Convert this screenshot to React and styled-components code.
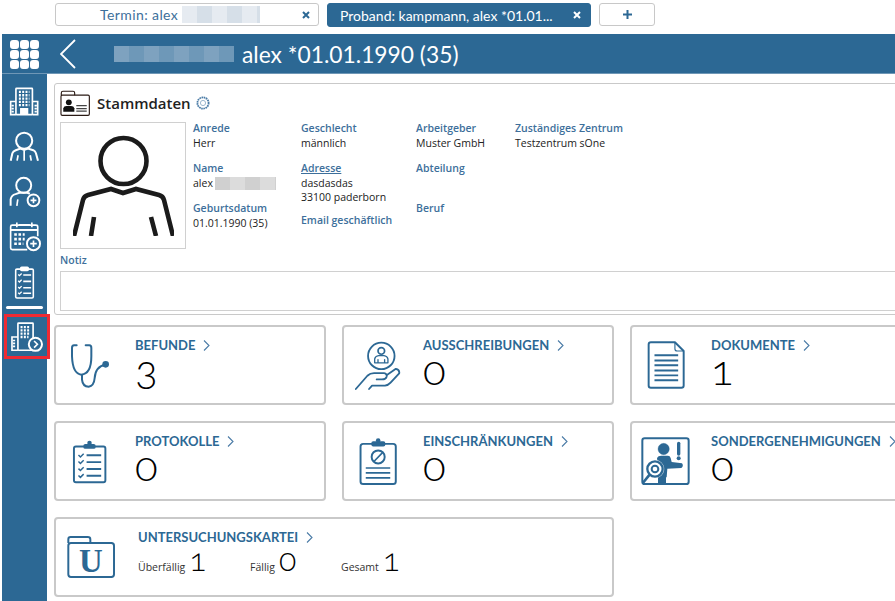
import React from 'react';
import styled, { createGlobalStyle } from 'styled-components';

const BLUE = '#2c6894';
const LABEL = '#3d6f9b';

const Global = createGlobalStyle`
  html, body { margin:0; padding:0; background:#fff; }
  body { font-family:"Open Sans","Liberation Sans",sans-serif; overflow:hidden; }
  * { box-sizing:border-box; }
`;

const Page = styled.div`
  width:895px;
  height:601px;
  overflow:hidden;
  display:flex;
  flex-direction:column;
  padding-left:2px;
`;

const TabBar = styled.div`
  height:34px;
  flex:none;
  display:flex;
  gap:8px;
  padding:3px 0 0 53px;
`;

const Tab = styled.div`
  width:${p => p.$w}px;
  height:${p => p.$active ? 24 : 23}px;
  border-radius:3px;
  border:${p => p.$active ? `1px solid ${BLUE}` : '1px solid #c8c8c8'};
  background:${p => p.$active ? BLUE : '#fff'};
  color:${p => p.$active ? '#fff' : LABEL};
  font-family:Lato,sans-serif;
  font-size:14px;
  letter-spacing:${p => p.$track || 0}px;
  display:flex;
  align-items:center;
  position:relative;
  padding-left:${p => p.$pad}px;
  white-space:nowrap;
`;

const TabClose = styled.svg`
  position:absolute;
  right:${p => p.$right}px;
  top:7px;
`;

const Plus = styled.div`
  width:56px;
  height:23px;
  border-radius:3px;
  border:1px solid #c8c8c8;
  display:flex;
  align-items:center;
  justify-content:center;
  color:${BLUE};
`;

const Redacted = styled.span`
  display:inline-block;
  flex:none;
  width:${p => p.$w}px;
  height:${p => p.$h}px;
  background:repeating-linear-gradient(90deg,${p => p.$a} 0 15px,${p => p.$b} 15px 30px);
  filter:blur(0.7px);
`;

const Header = styled.header`
  height:40px;
  flex:none;
  background:${BLUE};
  border-bottom:1px solid #6f97b6;
  display:flex;
  align-items:center;
  color:#fff;
`;

const AppGrid = styled.div`
  width:29px;
  height:29px;
  margin:2px 0 0 8px;
  display:grid;
  grid-template-columns:repeat(3,9px);
  grid-auto-rows:9px;
  gap:1px;
  span { background:#fff; border-radius:3px; }
`;

const BackIcon = styled.svg`
  margin:0 0 0 21px;
  flex:none;
`;

const HeaderTitle = styled.h1`
  margin:0 0 0 38px;
  display:flex;
  align-items:center;
  gap:8px;
  font-family:Lato,sans-serif;
  font-size:22.8px;
  font-weight:400;
`;

const Body = styled.div`
  flex:1;
  min-height:0;
  display:flex;
`;

const Sidebar = styled.nav`
  width:45px;
  flex:none;
  background:${BLUE};
  padding-top:5px;
  position:relative;
`;

const NavItem = styled.div`
  height:45px;
  display:flex;
  align-items:center;
  justify-content:center;
  svg { display:block; }
`;

const NavRule = styled.hr`
  border:0;
  height:3px;
  background:#fff;
  border-radius:2px;
  margin:2px 4px 5px 4px;
`;

const Highlight = styled(NavItem)`
  width:46px;
  margin-left:2px;
  outline:3px solid #ee2a33;
  outline-offset:-3px;
  position:relative;
  padding-right:2px;
`;

const Content = styled.main`
  flex:1;
  min-width:0;
  padding:9px 0 0 7px;
  overflow:hidden;
`;

const Panel = styled.section`
  width:860px;
  height:232px;
  border:1px solid #c9c9c9;
  border-radius:3px 0 0 3px;
  padding:5px 0 0 5px;
`;

const PanelHead = styled.div`
  display:flex;
  align-items:center;
  height:28px;
  margin-bottom:5px;
`;

const PanelTitle = styled.h2`
  margin:0 5px 0 7px;
  font-size:15px;
  font-weight:600;
  color:#222;
`;

const PanelBody = styled.div`
  display:flex;
`;

const Photo = styled.div`
  width:126px;
  height:127px;
  border:1px solid #d0d0d0;
  display:flex;
  align-items:flex-end;
  justify-content:center;
  padding-bottom:12px;
  flex:none;
`;

const Column = styled.div`
  width:${p => p.$w}px;
  flex:none;
  margin-top:-1px;
  padding-left:${p => p.$pad || 0}px;
`;

const FieldGroup = styled.div`
  min-height:${p => p.$min || 40}px;
`;

const Label = styled.div`
  font-size:10.5px;
  line-height:14px;
  font-weight:600;
  color:${LABEL};
  white-space:nowrap;
  text-decoration:${p => p.$link ? 'underline' : 'none'};
`;

const Value = styled.div`
  font-size:10.5px;
  line-height:14px;
  color:#222;
  margin-top:${p => p.$top || 0}px;
  display:flex;
  align-items:center;
  gap:2px;
  white-space:nowrap;
`;

const NoteLabel = styled(Label)`
  margin-top:4px;
`;

const NoteBox = styled.div`
  height:40px;
  margin-top:4px;
  border:1px solid #d0d0d0;
`;

const Cards = styled.div`
  display:grid;
  grid-template-columns:repeat(3,272px);
  grid-auto-rows:80px;
  gap:16px;
  margin-top:10px;
`;

const Card = styled.article`
  border:2px solid #c9c9c9;
  border-radius:4px;
  display:flex;
  align-items:center;
  grid-column:${p => p.$wide ? 'span 2' : 'auto'};
  width:${p => p.$wide ? '560px' : 'auto'};
`;

const IconSlot = styled.div`
  width:${p => p.$w || 79}px;
  flex:none;
  display:flex;
  justify-content:center;
  padding-right:12px;
  color:${BLUE};
  svg { display:block; }
`;

const CardText = styled.div`
  display:flex;
  flex-direction:column;
  align-self:flex-start;
  padding-top:9px;
`;

const CardTitle = styled.h3`
  margin:0;
  font-family:Lato,sans-serif;
  font-size:13px;
  line-height:18px;
  font-weight:700;
  color:${BLUE};
  display:flex;
  align-items:center;
  gap:8px;
  white-space:nowrap;
`;

const Count = styled.div`
  font-family:Lato,sans-serif;
  font-weight:300;
  font-size:42px;
  line-height:30px;
  color:#000;
  font-variant-numeric:oldstyle-nums;
`;

const Stats = styled.div`
  display:flex;
  margin-top:-1px;
`;

const Stat = styled.div`
  width:${p => p.$w}px;
  display:flex;
  align-items:baseline;
  gap:4px;
  font-size:10.5px;
  color:#333;
  b {
    font-family:Lato,sans-serif;
    font-weight:300;
    font-size:32px;
    line-height:28px;
    color:#000;
    font-variant-numeric:oldstyle-nums;
  }
`;

const Chevron = () => (
  <svg width="7" height="11" viewBox="0 0 7 11" fill="none" stroke="#4a7ba6" strokeWidth="1.1">
    <path d="M1 .5 6 5.5 1 10.5" />
  </svg>
);

const CloseIcon = ({ right, color }) => (
  <TabClose $right={right} width="8" height="8" viewBox="0 0 8 8" stroke={color} strokeWidth="2">
    <path d="M1 1 7 7M7 1 1 7" />
  </TabClose>
);

// icons below are drawn in 3x units, three units make one pixel
const Stethoscope = () => (
  <svg width="41" height="45" viewBox="55 65 123 135" fill="none" stroke={BLUE} strokeWidth="6" strokeLinecap="round">
    <path d="M78 72H70Q64 72 64 80V105Q66 158 92 160Q122 158 122 105V80Q122 72 116 72H105" />
    <path d="M94 160V175Q96 196 114 196Q130 194 132 170Q134 135 165 130" />
    <circle cx="165" cy="129" r="10" fill={BLUE} stroke="none" />
  </svg>
);

const ChecklistIcon = () => (
  <svg width="35" height="45" viewBox="65 352 108 136" fill="none" stroke={BLUE} strokeWidth="6">
    <rect x="71" y="374" width="97" height="110" rx="6" />
    <rect x="100" y="366" width="38" height="15" rx="6" fill={BLUE} stroke="none" />
    <circle cx="119" cy="363" r="7" fill={BLUE} stroke="none" />
    <path d="M85 400l6 6 10-10M85 420l6 6 10-10M85 442l6 6 10-10M85 463l6 6 10-10" strokeWidth="4.5" />
    <path d="M110 401H155M110 422H155M110 443H155M110 464H155" />
  </svg>
);

const HandIcon = () => (
  <svg width="47" height="49" viewBox="42 58 141 148" fill="none" stroke={BLUE} strokeWidth="5.5" strokeLinecap="round" strokeLinejoin="round">
    <circle cx="124" cy="103" r="40" />
    <circle cx="124" cy="88" r="10" strokeWidth="5" />
    <path d="M104 124V112Q106 103 116 102H132Q142 103 144 112V124ZM114 124V114M134 124V114" strokeWidth="4" />
    <path d="M47 203 82 163Q90 155 102 155H132Q142 157 140 166Q138 174 126 174H110" />
    <path d="M87 203 96 193H135Q145 192 152 184L178 156Q180 144 168 142L142 160" />
  </svg>
);

const BlockedIcon = () => (
  <svg width="38" height="47" viewBox="55 350 115 144" fill="none" stroke={BLUE} strokeWidth="6">
    <rect x="59" y="368" width="108" height="123" rx="8" />
    <rect x="92" y="360" width="43" height="16" rx="6" fill={BLUE} stroke="none" />
    <circle cx="113" cy="358" r="7" fill={BLUE} stroke="none" />
    <circle cx="113" cy="408" r="20" />
    <path d="M100 422 127 394M75 442H150M75 457H150M75 472H150" strokeWidth="5" />
  </svg>
);

const DocIcon = () => (
  <svg width="38" height="48" viewBox="65 60 115 148" fill="none" stroke={BLUE} strokeWidth="6" strokeLinejoin="round">
    <path d="M76 64H150L177 91V197Q177 204 170 204H76Q69 204 69 197V71Q69 64 76 64Z" />
    <path d="M150 64V84Q150 91 157 91H177" strokeWidth="3.5" />
    <path d="M87 104H160M87 120H160M87 135H160M87 151H160M87 166H160M87 181H160" />
  </svg>
);

const PermitIcon = () => (
  <svg width="49" height="49" viewBox="49 349 147 147" fill="none" stroke={BLUE}>
    <rect x="53" y="353" width="139" height="137" rx="7" strokeWidth="6" />
    <circle cx="117" cy="385" r="17" fill={BLUE} />
    <path d="M97 412Q100 405 110 405H130Q136 405 138 412L141 424 172 428Q178 436 170 442L128 444 126 470H104Z" fill={BLUE} stroke="none" />
    <path d="M100 468H124V488H100Z" fill={BLUE} stroke="none" />
    <circle cx="91" cy="445" r="27" fill="#fff" stroke="#fff" />
    <circle cx="91" cy="445" r="23" strokeWidth="7" />
    <circle cx="91" cy="445" r="10" strokeWidth="6" />
    <path d="M73 464 57 484" strokeWidth="8" strokeLinecap="round" />
    <path d="M162 368V400" strokeWidth="10" strokeLinecap="round" />
    <circle cx="162" cy="413" r="6" fill={BLUE} stroke="none" />
  </svg>
);

const FolderIcon = () => (
  <svg width="48" height="44" viewBox="49 75 146 129" fill="none" stroke={BLUE} strokeWidth="6">
    <path d="M53 97V86Q53 79 60 79H112Q120 79 120 86V97" />
    <rect x="53" y="97" width="139" height="103" rx="8" />
    <text x="122" y="186" textAnchor="middle" fontFamily="Liberation Serif, serif" fontWeight="700" fontSize="100" fill={BLUE} stroke="none">U</text>
  </svg>
);

const CardIdIcon = () => (
  <svg width="30" height="27" viewBox="28 30 92 79" fill="none" stroke="#2a1a14" strokeWidth="3.5">
    <path d="M32 44V37Q32 32 37 32H68Q73 32 73 37V44" />
    <rect x="31" y="44" width="87" height="62" rx="4" />
    <circle cx="55" cy="66" r="9" fill="#111" stroke="none" />
    <path d="M38 95V84Q40 77 48 77H62Q70 77 72 84V95Z" fill="#111" stroke="none" />
    <path d="M78 76H110M78 85H110M78 93H110" stroke="#444" />
  </svg>
);

const Gear = () => (
  <svg width="14" height="14" viewBox="0 0 14 14" fill="none" stroke="#4a7ba6">
    <circle cx="7" cy="7" r="5.6" strokeWidth="1.8" strokeDasharray="1.6 .6" />
    <circle cx="7" cy="7" r="2.6" strokeWidth="1" stroke="#9db8cf" />
  </svg>
);

const PersonPhoto = () => (
  <svg width="101" height="101" viewBox="0 0 101 101" fill="none" stroke="#1b1b1b" strokeWidth="4.6">
    <circle cx="50.5" cy="26" r="23" />
    <path d="M1 101 10 65Q11 61 15 60L38 54 50 58 63 54 86 60Q90 61 91 65L100 101" />
    <path d="M21 82 18 101M78 82 83 101" />
  </svg>
);

const BuildingIcon = () => (
  <svg width="31" height="29" viewBox="30 48 92 88" fill="none" stroke="#fff" strokeWidth="5">
    <rect x="50" y="52" width="50" height="80" rx="2" />
    <path d="M50 92H34V132H50M100 92H116V132H100" />
    <path d="M59 63H91M59 73H91M59 83H91M59 93H91M59 103H91" strokeWidth="7" strokeDasharray="6 4" />
    <path d="M40 102V126M110 102V126" strokeWidth="7" strokeDasharray="5 4" />
    <path d="M65 132V114H85V132" fill="#fff" />
  </svg>
);

const ManagerIcon = () => (
  <svg width="31" height="33" viewBox="28 184 92 92" fill="none" stroke="#fff" strokeWidth="6">
    <circle cx="73" cy="213" r="24" />
    <path d="M33 272 38 250Q40 244 48 241L62 236 73 240 84 236 100 241Q106 244 108 250L114 272" />
    <path d="M73 242V272M52 272 55 256M94 272 91 256" strokeWidth="5" />
  </svg>
);

const PersonAddIcon = () => (
  <svg width="32" height="33" viewBox="28 312 98 98" fill="none" stroke="#fff" strokeWidth="6">
    <circle cx="73" cy="342" r="23" />
    <path d="M33 405V385Q36 372 48 369L60 365 84 365 92 368" />
    <path d="M52 405 55 385" strokeWidth="5" />
    <circle cx="103" cy="388" r="18" />
    <path d="M103 379V397M94 388H112" strokeWidth="5" />
  </svg>
);

const CalendarAddIcon = () => (
  <svg width="32" height="31" viewBox="28 450 98 92" fill="none" stroke="#fff" strokeWidth="5">
    <path d="M84 536H38Q33 536 33 531V466Q33 461 38 461H110Q116 461 116 466V495" />
    <path d="M52 453V468M98 453V468M58 460H92" />
    <path d="M33 476H116" strokeWidth="6" />
    <path d="M44 490H76M44 504H76M44 518H72" strokeWidth="8" strokeDasharray="8 5" />
    <circle cx="103" cy="518" r="20" strokeWidth="6" fill={BLUE} />
    <path d="M103 508V528M93 518H113" strokeWidth="5" />
  </svg>
);

const ClipboardNavIcon = () => (
  <svg width="21" height="34" viewBox="42 562 64 108" fill="none" stroke="#fff" strokeWidth="5">
    <rect x="46" y="575" width="56" height="92" rx="4" />
    <rect x="62" y="569" width="24" height="10" rx="3" fill="#fff" />
    <path d="M54 592l4 4 7-7M54 612l4 4 7-7M54 632l4 4 7-7M54 650l4 4 7-7" strokeWidth="4" />
    <path d="M70 594H95M70 614H95M70 634H95M70 652H95" strokeWidth="5" />
  </svg>
);

const BuildingGoIcon = () => (
  <svg width="33" height="32" viewBox="28 750 100 96" fill="none" stroke="#fff" strokeWidth="5">
    <rect x="52" y="756" width="46" height="82" rx="2" />
    <path d="M52 798H34V838H52" />
    <path d="M60 768H90M60 778H90M60 788H90M60 798H84" strokeWidth="7" strokeDasharray="6 4" />
    <path d="M40 806V832" strokeWidth="7" strokeDasharray="5 4" />
    <circle cx="105" cy="820" r="20" fill={BLUE} strokeWidth="6" />
    <path d="M101 810 111 820 101 830" />
  </svg>
);

const topCards = [
  { title:'BEFUNDE', count:'3', icon:<Stethoscope /> },
  { title:'AUSSCHREIBUNGEN', count:'0', icon:<HandIcon /> },
  { title:'DOKUMENTE', count:'1', icon:<DocIcon /> },
  { title:'PROTOKOLLE', count:'0', icon:<ChecklistIcon /> },
  { title:'EINSCHRÄNKUNGEN', count:'0', icon:<BlockedIcon /> },
  { title:'SONDERGENEHMIGUNGEN', count:'0', icon:<PermitIcon /> },
];

export default function App() {
  return (
    <Page>
      <Global />
      <TabBar>
        <Tab $w={264} $pad={44} $track={0.4}>
          Termin: alex&nbsp;<Redacted $w={78} $h={17} $a="#e6ebf1" $b="#d6dfe8" />
          <CloseIcon right={8} color={BLUE} />
        </Tab>
        <Tab $active $w={264} $pad={12}>
          Proband: kampmann, alex *01.01...
          <CloseIcon right={9} color="#fff" />
        </Tab>
        <Plus>
          <svg width="9" height="9" viewBox="0 0 9 9" stroke={BLUE} strokeWidth="2"><path d="M4.5 0V9M0 4.5H9" /></svg>
        </Plus>
      </TabBar>

      <Header>
        <AppGrid>{Array.from({ length:9 }, (_, i) => <span key={i} />)}</AppGrid>
        <BackIcon width="16" height="30" viewBox="0 0 16 30" fill="none" stroke="#fff" strokeWidth="1.8">
          <path d="M15 1 1 15 15 29" />
        </BackIcon>
        <HeaderTitle>
          <Redacted $w={120} $h={16} $a="#7ea2bf" $b="#6e98b8" />
          alex *01.01.1990 (35)
        </HeaderTitle>
      </Header>

      <Body>
        <Sidebar>
          <NavItem><BuildingIcon /></NavItem>
          <NavItem><ManagerIcon /></NavItem>
          <NavItem><PersonAddIcon /></NavItem>
          <NavItem><CalendarAddIcon /></NavItem>
          <NavItem><ClipboardNavIcon /></NavItem>
          <NavRule />
          <Highlight><BuildingGoIcon /></Highlight>
        </Sidebar>

        <Content>
          <Panel>
            <PanelHead>
              <CardIdIcon />
              <PanelTitle>Stammdaten</PanelTitle>
              <Gear />
            </PanelHead>
            <PanelBody>
              <Photo><PersonPhoto /></Photo>
              <Column $w={115} $pad={7}>
                <FieldGroup>
                  <Label>Anrede</Label>
                  <Value $top={1}>Herr</Value>
                </FieldGroup>
                <FieldGroup>
                  <Label>Name</Label>
                  <Value $top={1}>alex <Redacted $w={61} $h={13} $a="#d0d0d0" $b="#dcdcdc" /></Value>
                </FieldGroup>
                <FieldGroup>
                  <Label>Geburtsdatum</Label>
                  <Value $top={1}>01.01.1990 (35)</Value>
                </FieldGroup>
              </Column>
              <Column $w={115}>
                <FieldGroup>
                  <Label>Geschlecht</Label>
                  <Value $top={1}>männlich</Value>
                </FieldGroup>
                <FieldGroup $min={52}>
                  <Label $link>Adresse</Label>
                  <Value $top={1}>dasdasdas</Value>
                  <Value>33100 paderborn</Value>
                </FieldGroup>
                <Label>Email geschäftlich</Label>
              </Column>
              <Column $w={99}>
                <FieldGroup>
                  <Label>Arbeitgeber</Label>
                  <Value $top={1}>Muster GmbH</Value>
                </FieldGroup>
                <FieldGroup>
                  <Label>Abteilung</Label>
                </FieldGroup>
                <Label>Beruf</Label>
              </Column>
              <Column $w={160}>
                <Label>Zuständiges Zentrum</Label>
                <Value $top={1}>Testzentrum sOne</Value>
              </Column>
            </PanelBody>
            <NoteLabel>Notiz</NoteLabel>
            <NoteBox />
          </Panel>

          <Cards>
            {topCards.map(card => (
              <Card key={card.title}>
                <IconSlot>{card.icon}</IconSlot>
                <CardText>
                  <CardTitle>{card.title} <Chevron /></CardTitle>
                  <Count>{card.count}</Count>
                </CardText>
              </Card>
            ))}
            <Card $wide>
              <IconSlot $w={82}><FolderIcon /></IconSlot>
              <CardText>
                <CardTitle>UNTERSUCHUNGSKARTEI <Chevron /></CardTitle>
                <Stats>
                  <Stat $w={112}>Überfällig <b>1</b></Stat>
                  <Stat $w={91}>Fällig <b>0</b></Stat>
                  <Stat $w={80}>Gesamt <b>1</b></Stat>
                </Stats>
              </CardText>
            </Card>
          </Cards>
        </Content>
      </Body>
    </Page>
  );
}
